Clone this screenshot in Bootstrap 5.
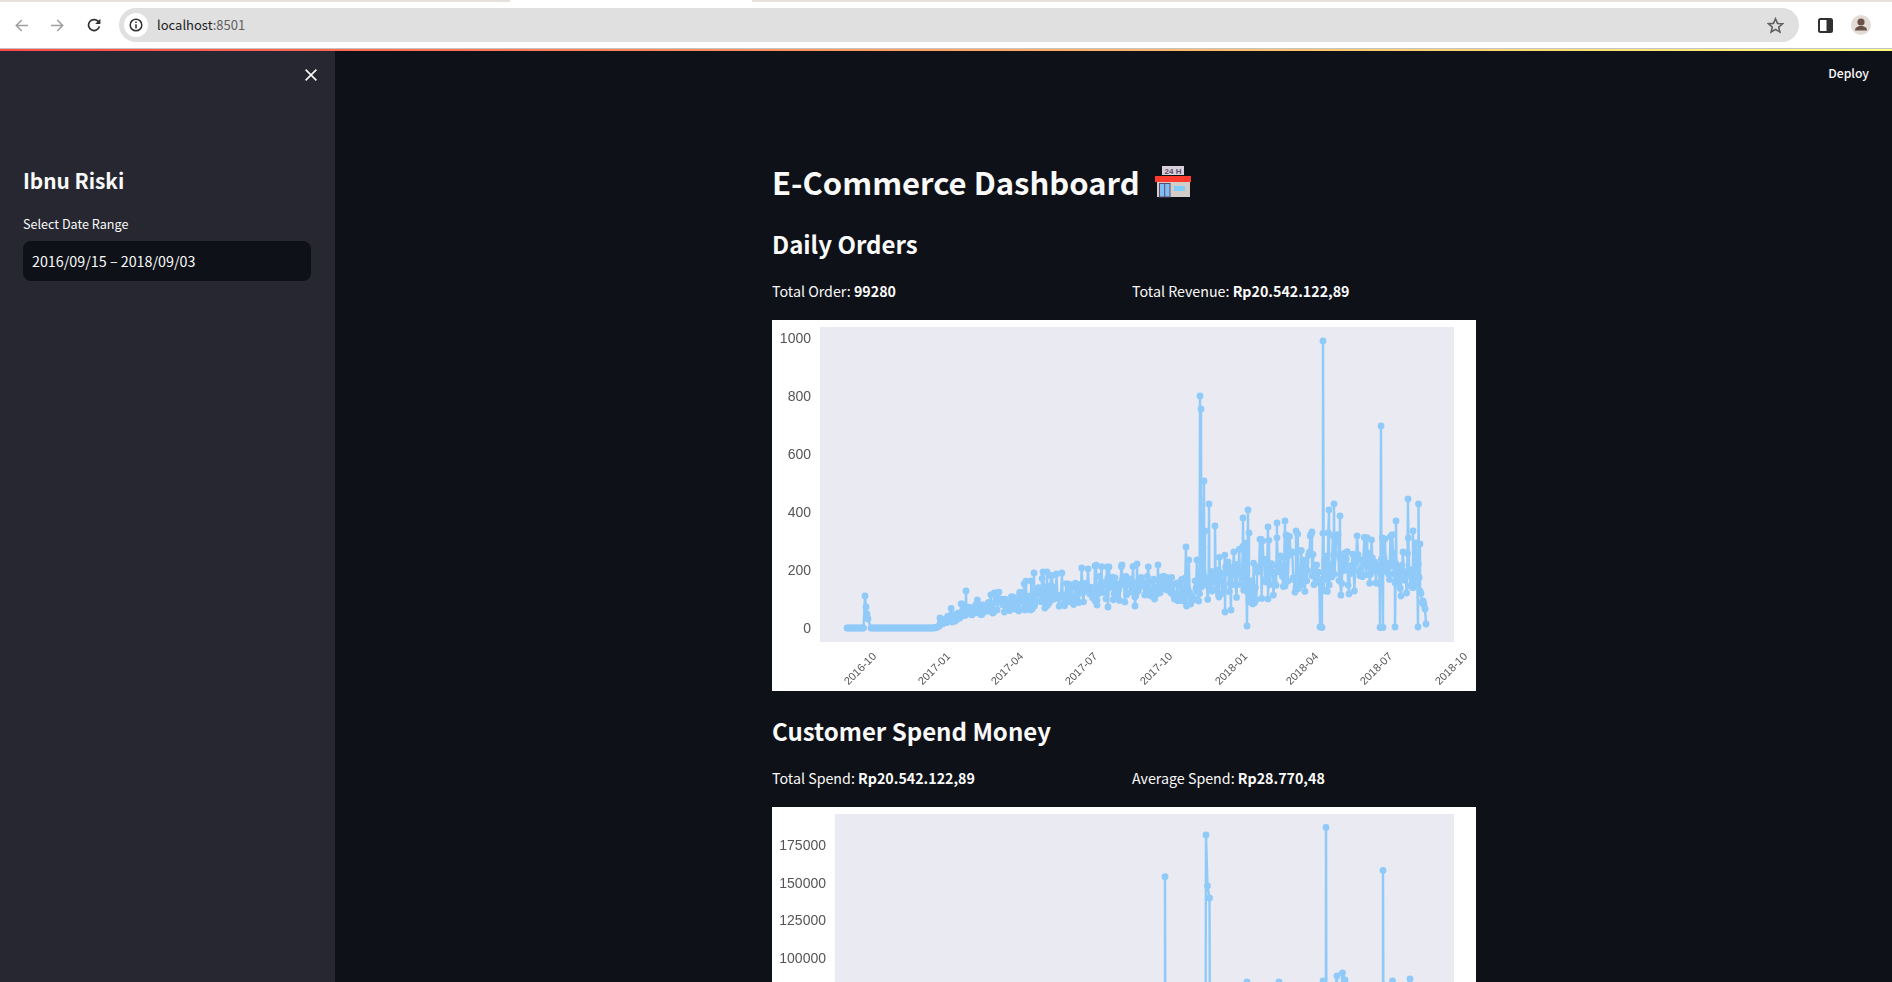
<!DOCTYPE html>
<html lang="en">
<head>
    <title>E-Commerce Dashboard</title>
    <meta name="viewport" content="width=device-width, initial-scale=1">
    <link href="https://cdn.jsdelivr.net/npm/bootstrap@5.3.0/dist/css/bootstrap.min.css" rel="stylesheet">
    <script src="https://cdn.jsdelivr.net/npm/bootstrap@5.3.0/dist/js/bootstrap.bundle.min.js"></script>
    <style>
        html, body {
            height: 982px;
            overflow: hidden;
            background: #0e1117;
        }
        body {
            font-family: "Noto Sans CJK SC", "Noto Sans", sans-serif;
            color: #fafafa;
        }
        /* browser toolbar */
        .tab-strip {
            height: 2px;
            background: #e5e0dc;
        }
        .tab-gap {
            width: 242px;
            margin-left: 510px;
            background: #fff;
        }
        .browser-bar {
            height: 46px;
            background: #fff;
            padding-left: 15px;
            padding-right: 21px;
        }
        .bar-btn {
            width: 36px;
        }
        .omnibox {
            width: 1680px;
            height: 34px;
            margin-left: -4px;
            margin-right: 15px;
            padding-left: 5px;
            padding-right: 15px;
            border-radius: 17px;
            background: #e0e0e0;
            font-size: 13px;
            color: #5f5f5f;
        }
        .info-dot {
            width: 24px;
            height: 24px;
            margin-right: 9px;
            border-radius: 50%;
            background: #fff;
        }
        .host-name {
            color: #202124;
        }
        .avatar-pic {
            margin-left: 18px;
        }
        .deco-line {
            height: 3px;
            border-top: 1px solid #c4c4c4;
            background: linear-gradient(90deg, #ff4b4b, #fffd80);
            background-clip: padding-box;
        }
        /* app */
        .app-shell {
            height: 932px;
        }
        .side-panel {
            width: 335px;
            flex: none;
            background: #262730;
            padding: 0 24px 0 23px;
        }
        .side-close {
            height: 48px;
            margin-right: -6px;
        }
        .side-title {
            margin: 64px 0 0;
            font-size: 20.8px;
            line-height: 34px;
            font-weight: 600;
        }
        .side-label {
            margin: 17px 0 0;
            font-size: 12.6px;
            line-height: 20px;
        }
        .date-box {
            height: 40px;
            margin-top: 7px;
            padding-left: 9px;
            border-radius: 8px;
            background: #0e1117;
            font-size: 14.3px;
        }
        .main-panel {
            overflow: hidden;
        }
        .deploy-link {
            height: 44px;
            padding-right: 23px;
            font-size: 12.2px;
            font-weight: 500;
        }
        .dash-content {
            width: 704px;
            margin-left: 437px;
        }
        .dash-title {
            margin: 60px 0 0;
            font-size: 31px;
            line-height: 54px;
            font-weight: 600;
        }
        .title-icon {
            margin-left: 15px;
        }
        .dash-head {
            font-size: 24px;
            line-height: 40px;
            font-weight: 600;
            margin: 0;
        }
        .head-first {
            margin-top: 15px;
        }
        .head-next {
            margin-top: 20px;
        }
        .stat-row {
            --bs-gutter-x: 16px;
            height: 24px;
            margin-top: 15px;
            margin-bottom: 17px;
            font-size: 14.25px;
            line-height: 24px;
        }
        .stat-row b {
            font-weight: 600;
        }
        .chart-pic {
            display: block;
            width: 704px;
            height: 371px;
            background: #fff;
            filter: blur(.35px);
        }
        .chart-pic text {
            font-family: "Liberation Sans", Arial, sans-serif;
            fill: #555;
        }
    </style>
</head>
<body>

    <div class="tab-strip d-flex">
        <div class="tab-gap"></div>
    </div>
    <div class="browser-bar d-flex align-items-center">
        <div class="bar-btn d-flex">
            <svg width="13" height="13" viewBox="0 0 13 13" fill="none" stroke="#a0a0a0" stroke-width="1.6"><path d="M13 6.500H1.500M6.800 1L1.300 6.500l5.500 5.500"/></svg>
        </div>
        <div class="bar-btn d-flex">
            <svg width="13" height="13" viewBox="0 0 13 13" fill="none" stroke="#a0a0a0" stroke-width="1.6"><path d="M0 6.500h11.500M6.200 1l5.500 5.500-5.500 5.500"/></svg>
        </div>
        <div class="bar-btn d-flex">
            <svg width="14" height="14" viewBox="0 0 14 14" fill="none" stroke="#303030" stroke-width="1.7"><path d="M12.400 8.400A5.500 5.500 0 1 1 11 3.200L12.800 5"/><path d="M13.400.8v5.200H8.200" fill="#303030" stroke="none"/></svg>
        </div>
        <div class="omnibox d-flex align-items-center">
            <div class="info-dot d-flex align-items-center justify-content-center">
                <svg width="14" height="14" viewBox="0 0 14 14" fill="none" stroke="#303030" stroke-width="1.5"><circle cx="7" cy="7" r="5.800"/><path d="M7 6.200v4.200M7 3.400v1.500"/></svg>
            </div>
            <span class="flex-grow-1"><span class="host-name">localhost</span>:8501</span>
            <svg width="17" height="17" viewBox="0 0 17 17" fill="none" stroke="#5f5f5f" stroke-width="1.600"><path d="M8.500 1.800l2 4.600 5 .4-3.800 3.300 1.200 4.900-4.400-2.600-4.400 2.600 1.200-4.900L1.500 6.800l5-.4z"/></svg>
        </div>
        <svg width="15" height="15" viewBox="0 0 15 15" class="ms-1"><rect x="1" y="1" width="13" height="13" rx="1.500" fill="#fff" stroke="#303030" stroke-width="2"/><rect x="8.500" y="1" width="5.500" height="13" fill="#303030"/></svg>
        <svg width="20" height="20" viewBox="0 0 20 20" class="avatar-pic"><circle cx="10" cy="10" r="10" fill="#e3dbd6"/><circle cx="10" cy="7" r="3.600" fill="#6b5148"/><path d="M4 15.500c0-3 2.500-4.500 6-4.500s6 1.500 6 4.500z" fill="#6b5148"/></svg>
    </div>
    <div class="deco-line"></div>

    <div class="app-shell d-flex">
        <aside class="side-panel">
            <div class="side-close d-flex align-items-center justify-content-end">
                <svg width="12" height="12" viewBox="0 0 12 12" stroke="#fafafa" stroke-width="1.600"><path d="M.6.6l10.800 10.800M11.400.6L.6 11.400"/></svg>
            </div>
            <h2 class="side-title">Ibnu Riski</h2>
            <p class="side-label">Select Date Range</p>
            <div class="date-box d-flex align-items-center">2016/09/15 – 2018/09/03</div>
        </aside>

        <main class="main-panel flex-grow-1">
            <div class="deploy-link d-flex align-items-center justify-content-end">Deploy</div>
            <div class="dash-content">
                <h1 class="dash-title d-flex align-items-center">E-Commerce Dashboard
                    <svg class="title-icon" width="36" height="32" viewBox="0 0 36 32">
                        <rect x="7" y="0" width="22" height="9" fill="#d8d0d8"/>
                        <text x="18" y="7.500" text-anchor="middle" font-size="8" font-weight="700" fill="#5c4a72" font-family="Liberation Sans, sans-serif">24 H</text>
                        <rect x="2" y="16" width="33" height="15" fill="#d3cdc9"/>
                        <rect x="0" y="10" width="36" height="6" fill="#ff3b30"/>
                        <rect x="4.500" y="17.500" width="10.500" height="13.500" fill="#7fbdf5" stroke="#5c4a72"/>
                        <path d="M9.700 17.500v13.500" stroke="#5c4a72"/>
                        <rect x="19" y="20" width="11" height="5" fill="#7fcdfb"/>
                    </svg>
                </h1>

                <h2 class="dash-head head-first">Daily Orders</h2>
                <div class="row stat-row">
                    <div class="col-6">Total Order: <b>99280</b></div>
                    <div class="col-6">Total Revenue: <b>Rp20.542.122,89</b></div>
                </div>
                <svg id="orders-chart" class="chart-pic" viewBox="772 319 704 371"></svg>

                <h2 class="dash-head head-next">Customer Spend Money</h2>
                <div class="row stat-row">
                    <div class="col-6">Total Spend: <b>Rp20.542.122,89</b></div>
                    <div class="col-6">Average Spend: <b>Rp28.770,48</b></div>
                </div>
                <svg id="spend-chart" class="chart-pic" viewBox="772 806 704 371"></svg>
            </div>
        </main>
    </div>

    <script>
        const LINE = "#90caf9";
        const PLOT_BG = "#eaeaf2";

        // small seeded random so the chart comes out the same every time
        let seed = 41;
        function rnd() {
            seed = (seed * 16807) % 2147483647;
            return seed / 2147483647;
        }

        function interp(bands, x) {
            for (let i = 1; i < bands.length; i++) {
                if (x <= bands[i][0]) {
                    const a = bands[i - 1], b = bands[i];
                    const t = (x - a[0]) / (b[0] - a[0]);
                    return [a[1] + (b[1] - a[1]) * t, a[2] + (b[2] - a[2]) * t];
                }
            }
            return bands[bands.length - 1].slice(1);
        }

        function drawChart(svg, plot, yTicks, points) {
            let html = `<rect x="${plot.x}" y="${plot.y}" width="${plot.w}" height="${plot.h}" fill="${PLOT_BG}"/>`;
            yTicks.forEach(t => {
                html += `<text x="${plot.x - 9}" y="${t[1] + 4}" text-anchor="end" font-size="14">${t[0]}</text>`;
            });
            plot.xTicks.forEach(t => {
                html += `<text transform="translate(${t[1]} ${plot.y + plot.h + 15}) rotate(-45)" text-anchor="end" font-size="11">${t[0]}</text>`;
            });
            const pts = points.map(p => p[0].toFixed(1) + "," + p[1].toFixed(1)).join(" ");
            html += `<polyline points="${pts}" fill="none" stroke="${LINE}" stroke-width="2.4" stroke-linejoin="round"/>`;
            points.forEach(p => {
                html += `<circle cx="${p[0].toFixed(1)}" cy="${p[1].toFixed(1)}" r="3.4" fill="${LINE}"/>`;
            });
            svg.innerHTML = html;
        }

        // Daily orders: noisy band with hand placed spikes on top
        const bands = [
            [935, 626, 627], [950, 610, 622], [965, 603, 617], [1000, 592, 612],
            [1040, 578, 608], [1100, 566, 602], [1165, 566, 600], [1185, 562, 605],
            [1230, 555, 592], [1250, 542, 606], [1300, 535, 590], [1340, 535, 595],
            [1375, 540, 590], [1400, 535, 590], [1420, 545, 600], [1426, 600, 622]
        ];
        const spikes = [
            [865, 595], [866, 606], [867, 613], [868, 618],
            [940, 617], [966, 590], [1034, 572], [1034.5, 605], [1043, 571], [1047, 571], [1051, 575],
            [1095, 565], [1097, 604], [1109, 566], [1108, 606], [1122, 564], [1137, 563], [1135, 605], [1158, 564],
            [1186, 546], [1186.5, 605], [1200, 395], [1201, 408], [1203, 546], [1204, 480], [1205, 530],
            [1209, 503], [1212, 590], [1215, 525], [1219, 596], [1225, 611], [1228, 561], [1231, 609],
            [1243, 517], [1247, 625], [1248, 509], [1249, 532], [1253, 591], [1268, 526], [1277, 522],
            [1285, 520], [1296, 530], [1312, 531], [1323, 340], [1320, 626], [1322, 626.5], [1329, 509],
            [1334, 503], [1340, 515], [1345, 552], [1381, 425], [1380, 626.5], [1383, 626.5], [1395, 626],
            [1396, 520], [1401, 595], [1408, 498], [1413, 530], [1418, 626], [1418.5, 503], [1420, 543]
        ];

        const orderPts = [];
        for (let x = 847; x < 935; x += 1.5) {
            if (x < 864 || x > 870) orderPts.push([x, 627]);
        }
        for (let x = 935; x < 1424; x += 0.9) {
            const b = interp(bands, x);
            let y = b[0] + (b[1] - b[0]) * (0.25 + rnd() * 0.75);
            if (rnd() < 0.1) y = b[0] - rnd() * 3;
            orderPts.push([x, y]);
        }
        orderPts.push([1423, 600], [1424, 604], [1425, 608], [1426, 623]);
        spikes.forEach(s => orderPts.push(s));
        orderPts.sort((a, b) => a[0] - b[0]);

        drawChart(document.getElementById("orders-chart"),
            { x: 820, y: 326, w: 634, h: 315,
              xTicks: [["2016-10", 877], ["2017-01", 951], ["2017-04", 1024], ["2017-07", 1098], ["2017-10", 1173],
                       ["2018-01", 1248], ["2018-04", 1319], ["2018-07", 1393], ["2018-10", 1468]] },
            [[1000, 338], [800, 396], [600, 454], [400, 512], [200, 570], [0, 628]],
            orderPts);

        // Customer spend: the window only shows the spikes, their feet are below it
        const spendPts = [
            [1165, 1085], [1165, 875.7], [1165.5, 1085], [1205.5, 1075], [1206, 834], [1207.5, 885], [1209.5, 897],
            [1210, 1070], [1247, 981], [1247.5, 1060], [1279, 981], [1279.5, 1060], [1323, 980], [1323.5, 1060], [1325.8, 1040], [1326, 826.5],
            [1326.5, 1040], [1337, 975], [1337.5, 1040], [1342.5, 972], [1345, 979], [1345.5, 1040],
            [1383, 1040], [1383, 869.5], [1383.5, 1040], [1392.5, 980], [1393, 1040], [1410, 978], [1410.5, 1060]
        ];
        drawChart(document.getElementById("spend-chart"),
            { x: 835, y: 813, w: 619, h: 315, xTicks: [] },
            [[175000, 845], [150000, 882.5], [125000, 920], [100000, 957.7]],
            spendPts);
    </script>

</body>
</html>
